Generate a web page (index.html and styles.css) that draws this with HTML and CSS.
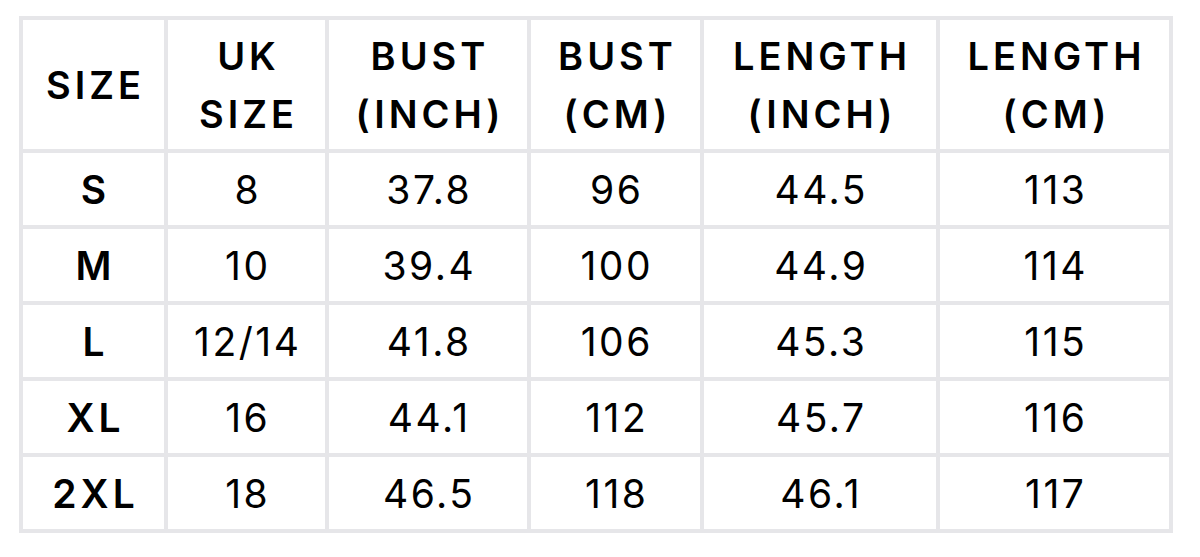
FILE: index.html
```html
<!DOCTYPE html>
<html>
<head>
<meta charset="utf-8">
<link rel="stylesheet" href="styles.css">
</head>
<body>
<table class="size-chart">
  <colgroup>
    <col class="c1"><col class="c2"><col class="c3"><col class="c4"><col class="c5"><col class="c6">
  </colgroup>
  <thead>
    <tr>
      <th>SIZE</th>
      <th>UK<br>SIZE</th>
      <th>BUST<br>(INCH)</th>
      <th>BUST<br>(CM)</th>
      <th>LENGTH<br>(INCH)</th>
      <th>LENGTH<br>(CM)</th>
    </tr>
  </thead>
  <tbody>
    <tr><th>S</th><td>8</td><td>37.8</td><td>96</td><td>44.5</td><td>113</td></tr>
    <tr><th>M</th><td>10</td><td>39.4</td><td>100</td><td>44.9</td><td>114</td></tr>
    <tr><th>L</th><td>12/14</td><td>41.8</td><td>106</td><td>45.3</td><td>115</td></tr>
    <tr><th>XL</th><td>16</td><td>44.1</td><td>112</td><td>45.7</td><td>116</td></tr>
    <tr><th>2XL</th><td>18</td><td>46.5</td><td>118</td><td>46.1</td><td>117</td></tr>
  </tbody>
</table>
</body>
</html>
```
FILE: styles.css
```css
html, body {
  margin: 0;
  padding: 0;
  background: #ffffff;
}
body {
  padding: 16px 0 0 19px;
  font-family: Inter, "Noto Sans", sans-serif;
  color: #000;
}
.size-chart {
  border-collapse: separate;
  border-spacing: 0;
  table-layout: fixed;
  width: 1154px;
  border-top: 4px solid #e6e6e9;
  border-left: 4px solid #e6e6e9;
}
.c1 { width: 145px; }
.c2 { width: 161px; }
.c3 { width: 202px; }
.c4 { width: 173px; }
.c5 { width: 236px; }
.c6 { width: 233px; }
.size-chart th,
.size-chart td {
  border-right: 4px solid #e6e6e9;
  border-bottom: 4px solid #e6e6e9;
  padding: 0;
  text-align: center;
  vertical-align: middle;
}
.size-chart thead th {
  height: 129px;
  font-size: 38px;
  font-weight: 600;
  letter-spacing: 4px;
  padding-left: 4px;
  line-height: 58px;
}
.size-chart tbody th,
.size-chart tbody td {
  height: 72px;
  font-size: 39px;
}
.size-chart tbody th {
  font-weight: 600;
  letter-spacing: 4px;
  padding-left: 4px;
}
.size-chart tbody td {
  font-weight: 400;
  letter-spacing: 2.5px;
  padding-left: 2.5px;
}
```
